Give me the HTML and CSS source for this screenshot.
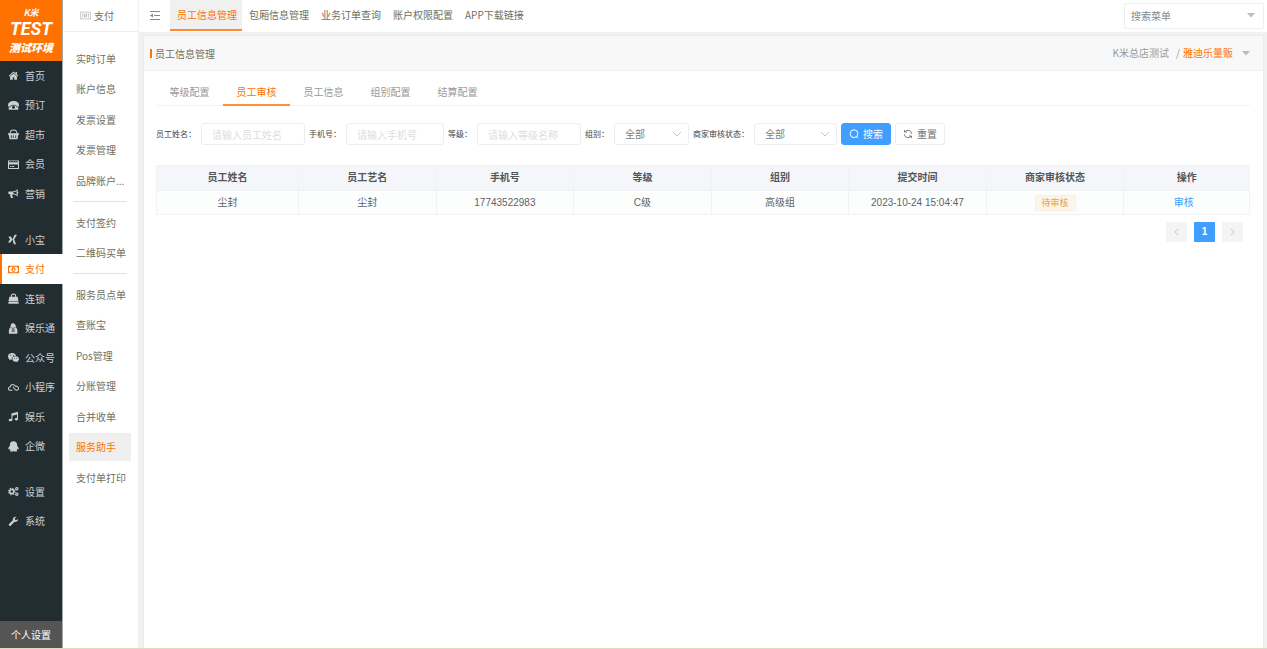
FILE: index.html
```html
<!DOCTYPE html>
<html lang="zh-CN">
<head>
<meta charset="utf-8">
<title>员工信息管理</title>
<link rel="stylesheet" href="styles.css">
</head>
<body>
<div class="app">
  <aside class="sidebar">
    <div class="logo">
      <span class="logo-brand">K米</span>
      <span class="logo-test">TEST</span>
      <span class="logo-env">测试环境</span>
    </div>
    <nav class="main-nav">
      <ul class="nav-group">
        <li><a class="nav-link" href="#"><svg class="icon" viewBox="0 0 16 16"><path d="M8 2 1 8.500l1 1L8 4l6 5.500 1-1-2-1.900V3h-2v1.700zM3 9.500V14h4v-3.500h2V14h4V9.500L8 5z"/></svg>首页</a></li>
        <li><a class="nav-link" href="#"><svg class="icon" viewBox="0 0 16 16"><path d="M8 1.500C3 1.500 0 4 0 8v1.500h4V7.500c2-1 6-1 8 0v2h4V8c0-4-3-6.500-8-6.500z"/><path d="M1 10.500h2.500c.5-1 1-2 2-2.500h5c1 .5 1.500 1.500 2 2.500H15V14H1zM8 8.500a2.200 2.200 0 1 0 0 4.400 2.200 2.200 0 0 0 0-4.400z" fill-rule="evenodd"/></svg>预订</a></li>
        <li><a class="nav-link" href="#"><svg class="icon" viewBox="0 0 16 16"><path d="M3 7C3 3.500 5 1.500 8 1.500S13 3.500 13 7" fill="none" stroke="currentColor" stroke-width="1.500"/><path d="M0 6h16v2.500h-1L13.700 15H2.300L1 8.500H0zM4 9l.3 4h1.200L5.200 9zm3 0v4h1.200V9zm3.800 0-.3 4h1.200L12 9z" fill-rule="evenodd"/></svg>超市</a></li>
        <li><a class="nav-link" href="#"><svg class="icon" viewBox="0 0 16 16"><path d="M0 2h16v12.500H0zM1.500 3.400v1.500h13V3.400zM1.500 8v5h13V8zm1.500 2.300h2v1.200H3zm3 0h3v1.200H6z" fill-rule="evenodd"/></svg>会员</a></li>
        <li><a class="nav-link" href="#"><svg class="icon" viewBox="0 0 16 16"><path d="M14 1.500C12 3.500 10 5 6 5H2C.8 5 .5 5.700.5 7s.3 2 1.500 2h1.500c-.5 2 0 4 1 5.500h3C6.500 13 6 11 6.500 9.200c3.500.3 5.500 1.500 7.500 3.300V8.500c1.300 0 1.300-3 0-3zm-1.500 2.800v5.400C11 8.600 9.500 8 7.500 7.800V6.200c2-.2 3.500-.8 5-1.900z" fill-rule="evenodd"/></svg>营销</a></li>
      </ul>
      <ul class="nav-group">
        <li><a class="nav-link" href="#"><svg class="icon" viewBox="0 0 16 16"><path d="M.5 3.500h3.700L6.500 7.500 3.700 12.500H0l3-5zM9.500 1H13L9 8l2.700 7H8.500L6.500 8z"/></svg>小宝</a></li>
        <li><a class="nav-link nav-active" href="#" aria-current="page"><svg class="icon" viewBox="0 0 16 16"><path d="M0 2.500h16v11H0zM3.500 4 1.500 6v4l2 2h9l2-2V6l-2-2zM8 4.500a3 3.500 0 1 1 0 7 3 3.500 0 0 1 0-7zM7 6v1h.5v2H7v1h2.500V9H9V6z" fill-rule="evenodd"/></svg>支付</a></li>
        <li><a class="nav-link" href="#"><svg class="icon" viewBox="0 0 16 16"><path d="M4.800 7V4.500C4.800 2.500 6 1.500 8 1.500s3.200 1 3.200 3V7" fill="none" stroke="currentColor" stroke-width="1.500"/><path d="M2 5.500h12l1.300 6.500H.7zM.6 12.700h14.800V15.500H.6z"/></svg>连锁</a></li>
        <li><a class="nav-link" href="#"><svg class="icon" viewBox="0 0 16 16"><path d="M5.500.5h3L11 3l.5 3h-8L4 3zM3 6.500h9c2 2.500 2 6 1.500 9h-12C1 12.500 1 9 3 6.500zM5.500 8v1.500h4V8zm-.500 3v1.500h5V11z" fill-rule="evenodd"/></svg>娱乐通</a></li>
        <li><a class="nav-link" href="#"><svg class="icon" viewBox="0 0 16 16"><path d="M6 1.500C2.500 1.500 0 3.700 0 6.500c0 1.500.8 2.800 2 3.700L1.500 12l2-1 2 .4C5 8 7.500 5.500 11.800 5.500 11.300 3.200 9 1.500 6 1.500zM3.900 4a.8.800 0 1 1 0 1.600.8.800 0 0 1 0-1.600zM8 4a.8.800 0 1 1 0 1.600A.8.800 0 0 1 8 4zM11.200 6.300c-2.700 0-4.800 1.800-4.800 4s2.100 4 4.800 4l1.500-.2 1.600.9-.4-1.500c1.300-.8 2.100-1.900 2.100-3.200 0-2.200-2.100-4-4.800-4zM9.700 8.300a.7.700 0 1 1 0 1.400.7.700 0 0 1 0-1.400zm3 0a.7.700 0 1 1 0 1.400.7.700 0 0 1 0-1.400z" fill-rule="evenodd"/></svg>公众号</a></li>
        <li><a class="nav-link" href="#"><svg class="icon" viewBox="0 0 16 16"><path d="M6.500 12h-3C1.600 12 .7 11 .7 9.500S1.700 7 3.500 7C3.700 4.800 5 3.500 7 3.500s2.700 1 3.700 2.500c2.500-.2 4.600 1.300 4.600 3.500 0 1.500-1 2.500-2.600 2.500-1.700 0-2.700-1-3.700-2.500L7.500 7" fill="none" stroke="currentColor" stroke-width="1.500"/></svg>小程序</a></li>
        <li><a class="nav-link" href="#"><svg class="icon" viewBox="0 0 16 16"><path d="M5 3.500 14.500 1v10.500c0 1.300-1 2.200-2.500 2.200s-2.300-.7-2.300-1.700 1-1.900 2.300-1.900l1 .1V5L6.500 6.800v6c0 1.300-1 2.200-2.700 2.200S1 14.300 1 13.300s1-1.900 2.300-1.900l1.700.1z"/></svg>娱乐</a></li>
        <li><a class="nav-link" href="#"><svg class="icon" viewBox="0 0 16 16"><path d="M8 .5C4.500.5 2.700 3 2.700 6v1C1 8.800.3 10.500.5 12.300c.5.400 1.300-.3 1.900-1 .2.800.6 1.400 1.200 2-1 .4-1.200 1-.8 1.500.8.700 4.100.6 5.200-.3 1.100.9 4.400 1 5.200.3.400-.5.200-1.100-.8-1.500.6-.6 1-1.200 1.200-2 .6.700 1.400 1.400 1.900 1 .2-1.800-.5-3.500-2.200-5.300V6c0-3-1.800-5.500-5.300-5.500z"/></svg>企微</a></li>
      </ul>
      <ul class="nav-group">
        <li><a class="nav-link" href="#"><svg class="icon" viewBox="0 0 16 16"><g fill="none" stroke="currentColor"><circle cx="5.500" cy="8" r="3" stroke-width="2.200"/><circle cx="5.500" cy="8" r="4.700" stroke-width="1.500" stroke-dasharray="1.900 1.800"/><circle cx="12.800" cy="4" r="1.700" stroke-width="1.600"/><circle cx="12.800" cy="12" r="1.700" stroke-width="1.600"/></g></svg>设置</a></li>
        <li><a class="nav-link" href="#"><svg class="icon" viewBox="0 0 16 16"><path d="M14.500 4.500 12 6 10 5V3l2.500-1.500C9.500.5 6.500 2.500 7 6L1.500 11.500c-1.500 1.500 1 4 2.500 2.500L9.500 8.500c3.500.8 5.500-1.500 5-4z"/></svg>系统</a></li>
      </ul>
    </nav>
    <button class="profile-btn" type="button">个人设置</button>
  </aside>

  <aside class="submenu">
    <div class="submenu-title"><svg class="icon" viewBox="0 0 16 16"><path d="M0 2.500h16v11H0zM1 3.500v9h14v-9zM3 5h2v1H4v4h1v1H3zm8 0h2v6h-2v-1h1V6h-1zM8 5a2.500 3 0 1 1 0 6 2.500 3 0 0 1 0-6zm-.5 1.500v3h1v-3z" fill-rule="evenodd"/></svg>支付</div>
    <ul class="sub-group">
      <li><a class="sub-link" href="#">实时订单</a></li>
      <li><a class="sub-link" href="#">账户信息</a></li>
      <li><a class="sub-link" href="#">发票设置</a></li>
      <li><a class="sub-link" href="#">发票管理</a></li>
      <li><a class="sub-link" href="#">品牌账户...</a></li>
    </ul>
    <ul class="sub-group">
      <li><a class="sub-link" href="#">支付签约</a></li>
      <li><a class="sub-link" href="#">二维码买单</a></li>
    </ul>
    <ul class="sub-group">
      <li><a class="sub-link" href="#">服务员点单</a></li>
      <li><a class="sub-link" href="#">查账宝</a></li>
      <li><a class="sub-link" href="#">Pos管理</a></li>
      <li><a class="sub-link" href="#">分账管理</a></li>
      <li><a class="sub-link" href="#">合并收单</a></li>
      <li><a class="sub-link sub-active" href="#" aria-current="page">服务助手</a></li>
      <li><a class="sub-link" href="#">支付单打印</a></li>
    </ul>
  </aside>

  <div class="content">
    <header class="topbar">
      <button class="collapse-btn" type="button" aria-label="收起菜单"><svg class="icon-menu" viewBox="0 0 12 12"><path d="M1 1.500h10M5 5.500h6M1 9.500h10" fill="none" stroke="currentColor"/><path d="M4 3.500v4l-3-2z"/></svg></button>
      <nav class="top-nav">
        <a class="top-link top-active" href="#" aria-current="page">员工信息管理</a>
        <a class="top-link" href="#">包厢信息管理</a>
        <a class="top-link" href="#">业务订单查询</a>
        <a class="top-link" href="#">账户权限配置</a>
        <a class="top-link" href="#">APP下载链接</a>
      </nav>
      <div class="select-wrap menu-search">
        <select class="menu-select" aria-label="搜索菜单"><option>搜索菜单</option></select>
        <svg class="caret" viewBox="0 0 8 5"><path d="M0 0h8L4 4.500z"/></svg>
      </div>
    </header>

    <main class="panel">
      <div class="panel-head">
        <h1 class="panel-title">员工信息管理</h1>
        <div class="store"><span>K米总店测试</span><span class="slash">/</span><button class="store-btn" type="button">雅迪乐量贩<svg class="caret-inline" viewBox="0 0 8 5"><path d="M0 0h8L4 4.500z"/></svg></button></div>
      </div>
      <div class="panel-body">
        <nav class="tabs">
          <a class="tab" href="#">等级配置</a>
          <a class="tab tab-active" href="#" aria-current="page">员工审核</a>
          <a class="tab" href="#">员工信息</a>
          <a class="tab" href="#">组别配置</a>
          <a class="tab" href="#">结算配置</a>
        </nav>
        <form class="filters">
          <div class="field"><label for="name">员工姓名：</label><input class="control" id="name" type="text" placeholder="请输入员工姓名"></div>
          <div class="field"><label for="phone">手机号：</label><input class="control control-phone" id="phone" type="text" placeholder="请输入手机号"></div>
          <div class="field"><label for="level">等级：</label><input class="control" id="level" type="text" placeholder="请输入等级名称"></div>
          <div class="field"><label for="group">组别：</label><div class="select-wrap"><select class="control control-group" id="group"><option>全部</option></select><svg class="chevron" viewBox="0 0 10 6"><path d="M1 1l4 4 4-4" fill="none" stroke="currentColor"/></svg></div></div>
          <div class="field"><label for="status">商家审核状态：</label><div class="select-wrap"><select class="control control-status" id="status"><option>全部</option></select><svg class="chevron" viewBox="0 0 10 6"><path d="M1 1l4 4 4-4" fill="none" stroke="currentColor"/></svg></div></div>
          <button class="btn btn-primary" type="button"><svg class="icon-btn" viewBox="0 0 10 10"><circle cx="5" cy="4.700" r="3.900" fill="none" stroke="currentColor"/><path d="M7.500 7.500 9 9.200" stroke="currentColor"/></svg>搜索</button>
          <button class="btn" type="reset"><svg class="icon-btn" viewBox="0 0 10 10"><path d="M1.500 1v2H4M2 2.800A3.700 3.700 0 0 1 8.700 4.800M8.500 9V7H6M8 7.200A3.700 3.700 0 0 1 1.300 5.200" fill="none" stroke="currentColor" stroke-width=".9"/></svg>重置</button>
        </form>
        <table class="grid">
          <thead><tr><th class="col-first">员工姓名</th><th>员工艺名</th><th>手机号</th><th>等级</th><th>组别</th><th>提交时间</th><th>商家审核状态</th><th class="col-last">操作</th></tr></thead>
          <tbody><tr><td>尘封</td><td>尘封</td><td>17743522983</td><td>C级</td><td>高级组</td><td>2023-10-24 15:04:47</td><td><span class="tag">待审核</span></td><td class="action-cell"><a class="action" href="#">审核</a></td></tr></tbody>
        </table>
        <nav class="pager" aria-label="分页">
          <button class="page" type="button" disabled aria-label="上一页"><svg class="page-arrow" viewBox="0 0 6 10"><path d="M5 1 1 5l4 4" fill="none" stroke="currentColor"/></svg></button>
          <button class="page page-current" type="button" aria-current="page">1</button>
          <button class="page" type="button" disabled aria-label="下一页"><svg class="page-arrow" viewBox="0 0 6 10"><path d="m1 1 4 4-4 4" fill="none" stroke="currentColor"/></svg></button>
        </nav>
      </div>
    </main>
  </div>
</div>
</body>
</html>
```
FILE: styles.css
```css
* {
  box-sizing: border-box;
}

body {
  margin: 0;
  background: #f1f1f1;
  color: #6f6f60;
  font: 10px/14px "Noto Sans CJK SC", sans-serif;
}

ul {
  margin: 0;
  padding: 0;
  list-style: none;
}

a {
  color: inherit;
  text-decoration: none;
}

button,
input,
select {
  margin: 0;
  font: inherit;
  color: inherit;
}

svg {
  flex: none;
  fill: currentColor;
}

.app {
  display: flex;
  min-height: 100vh;
  border-bottom: 1px solid #dcdcc4;
}

/* Primary navigation */
.sidebar {
  display: flex;
  flex: none;
  flex-direction: column;
  width: 63px;
  border-right: 1px solid #a5a9a9;
  background: #222d32;
  color: #ccd0d1;
}

.logo {
  display: flex;
  flex-direction: column;
  align-items: center;
  padding: 6px 0 5px;
  background: #ff7200;
  color: #fff;
  font-style: italic;
  font-weight: 700;
}

.logo-brand {
  font-size: 9px;
  line-height: 13px;
}

.logo-test {
  font: italic 700 18px/20px Roboto, sans-serif;
}

.logo-env {
  font-size: 11px;
  font-weight: 900;
  line-height: 17px;
}

.nav-group:first-child {
  padding-bottom: 1px;
}

.nav-group + .nav-group {
  margin-top: 16px;
}

.nav-group li {
  display: flex;
  height: 29px;
}

.nav-group li:nth-child(even) {
  height: 30px;
}

.nav-link {
  display: flex;
  flex: 1;
  align-items: center;
  gap: 6px;
  padding-left: 8px;
  white-space: nowrap;
}

.nav-active {
  margin-right: -1px;
  padding-left: 6px;
  border-left: 2px solid #ff7200;
  background: #fff;
  color: #ff7200;
}

.icon {
  width: 11px;
  height: 11px;
}

.profile-btn {
  height: 27px;
  margin-top: auto;
  padding: 0;
  border: 0;
  background: #555;
  color: #fff;
}

/* Secondary navigation */
.submenu {
  flex: none;
  width: 76px;
  border-right: 1px solid #f1f1f1;
  background: #fff;
}

.submenu-title {
  display: flex;
  align-items: center;
  gap: 3px;
  height: 32px;
  margin-bottom: 13px;
  padding-left: 17px;
  border-bottom: 1px solid #eee;
}

.submenu-title .icon {
  color: #bbb;
}

.sub-group {
  display: grid;
  gap: 3px;
  padding: 0 7px 0 6px;
}

.submenu-title + .sub-group {
  padding-bottom: 1px;
}

.sub-group + .sub-group::before {
  height: 1px;
  margin: 6px 4px 4px;
  background: #e2e2e2;
  content: "";
}

.sub-link {
  display: block;
  padding-left: 7px;
  line-height: 27px;
  white-space: nowrap;
}

li:nth-child(even) > .sub-link {
  line-height: 28px;
}

.sub-active {
  background: #efefef;
  color: #ff7200;
}

/* Top bar */
.content {
  display: flex;
  flex: 1;
  flex-direction: column;
  min-width: 0;
}

.topbar {
  display: flex;
  align-items: center;
  height: 32px;
  padding: 0 3px 1px 0;
  background: #fff;
}

.collapse-btn {
  display: flex;
  padding: 0 9px 0 10px;
  border: 0;
  background: none;
  color: #888;
}

.icon-menu {
  width: 12px;
  height: 12px;
}

.top-nav {
  display: flex;
  align-self: stretch;
}

.top-link {
  padding: 0 5px 0 7px;
  border-bottom: 2px solid transparent;
  line-height: 30px;
  white-space: nowrap;
}

.top-active {
  border-color: #ff8a35;
  background: #f0f0f0;
  color: #ff7200;
}

.select-wrap {
  display: flex;
  position: relative;
}

.menu-search {
  width: 140px;
  margin-left: auto;
}

.menu-select {
  width: 100%;
  height: 26px;
  padding: 0 6px;
  border: 1px solid #eee;
  border-radius: 2px;
  background: #fff;
  color: #888;
  appearance: none;
}

.caret {
  position: absolute;
  top: 10px;
  right: 9px;
  width: 8px;
  height: 5px;
  color: #bbb;
  pointer-events: none;
}

/* Panel */
.panel {
  flex: 1;
  margin: 3px 3px 0 4px;
  border: 1px solid #ebebeb;
  border-bottom: 0;
  background: #fff;
}

.panel-head {
  display: flex;
  align-items: center;
  justify-content: space-between;
  height: 35px;
  padding: 0 13px 0 6px;
  border-bottom: 1px solid #eee;
  background: #f8f8f8;
}

.panel-title {
  margin: 0;
  padding-left: 3px;
  border-left: 2px solid #ff7200;
  font-size: 10px;
  font-weight: 400;
  line-height: 9px;
}

.store {
  display: flex;
  align-items: center;
  color: #999;
}

.slash {
  padding: 0 3px 0 7px;
}

.store-btn {
  display: flex;
  align-items: center;
  gap: 9px;
  padding: 0;
  border: 0;
  background: none;
  color: #ff7200;
}

.caret-inline {
  width: 8px;
  height: 5px;
  color: #bbb;
}

.panel-body {
  padding: 0 13px 0 12px;
}

.tabs {
  display: flex;
  height: 35px;
  border-bottom: 1px solid #f3f3f3;
}

.tab {
  width: 67px;
  color: #999;
  line-height: 42px;
  text-align: center;
}

.tab-active {
  margin-bottom: -1px;
  border-bottom: 2px solid #ff9035;
  color: #ff7200;
}

.filters {
  display: flex;
  flex-wrap: wrap;
  gap: 4px;
  padding: 17px 0 20px;
}

.field {
  display: flex;
  align-items: center;
}

.field label {
  padding-right: 5px;
  color: #444;
  font-size: 8px;
}

.control {
  width: 104px;
  height: 22px;
  padding: 0 10px;
  border: 1px solid #ecedf0;
  border-radius: 3px;
  background: #fff;
  color: #808080;
  appearance: none;
}

.control::placeholder {
  color: #dcdde1;
}

.control-phone {
  width: 98px;
}

.control-group {
  width: 75px;
}

.control-status {
  width: 83px;
}

.chevron {
  position: absolute;
  top: 8px;
  right: 7px;
  width: 10px;
  height: 6px;
  color: #c0c4cc;
  pointer-events: none;
}

.btn {
  display: flex;
  align-items: center;
  justify-content: center;
  gap: 4px;
  width: 50px;
  height: 22px;
  padding: 0;
  border: 1px solid #ecedf0;
  border-radius: 3px;
  background: #fff;
  color: #707276;
}

.btn-primary {
  border-color: #409eff;
  background: #409eff;
  color: #fff;
}

.icon-btn {
  width: 10px;
  height: 10px;
}

/* Table */
.grid {
  width: 100%;
  border: 1px solid #f0f2f6;
  border-collapse: collapse;
  color: #606266;
  font-family: "Liberation Sans", "Noto Sans CJK SC", sans-serif;
  table-layout: fixed;
}

.grid th,
.grid td {
  height: 24px;
  padding: 0;
  border: 1px solid #f0f2f6;
  text-align: center;
}

.grid th {
  height: 25px;
  background: #f4f6fa;
  color: #555;
}

.grid td {
  background: #fbfefd;
}

.grid .action-cell {
  padding-right: 6px;
}

.col-first {
  width: 13%;
}

.col-last {
  width: 11.5%;
}

.tag {
  display: inline-block;
  padding: 0 6px;
  border: 1px solid #fbf0e0;
  border-radius: 2px;
  background: #fdf5ea;
  color: #e6a23c;
  font-size: 9px;
}

.action {
  color: #409eff;
}

.pager {
  display: flex;
  justify-content: flex-end;
  gap: 7px;
  padding: 7px 7px;
}

.page {
  display: flex;
  align-items: center;
  justify-content: center;
  width: 21px;
  height: 20px;
  padding: 0;
  border: 0;
  border-radius: 1px;
  background: #f4f4f5;
  color: #b4b8c0;
}

.page-current {
  background: #409eff;
  color: #fff;
  font: 700 10px/14px "Liberation Sans", sans-serif;
}

.page-arrow {
  width: 5px;
  height: 8px;
}
```
